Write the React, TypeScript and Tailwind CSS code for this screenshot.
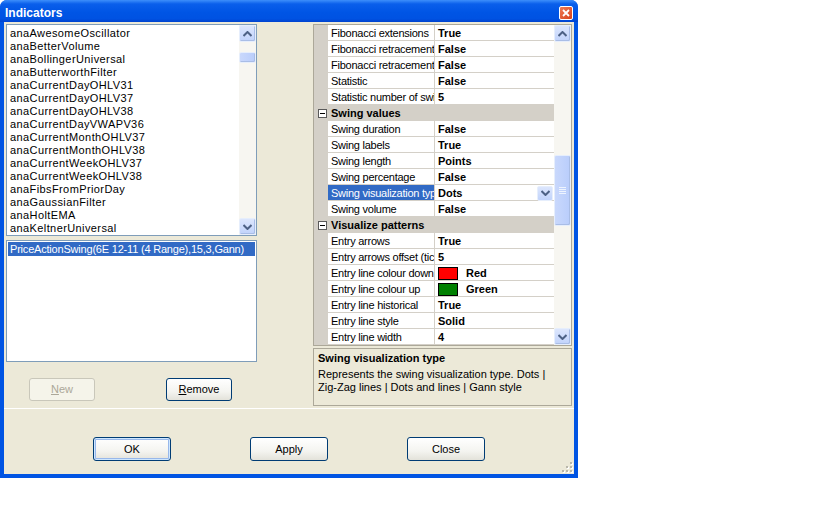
import { ReactNode } from 'react';

const indicators = [
  'anaAwesomeOscillator',
  'anaBetterVolume',
  'anaBollingerUniversal',
  'anaButterworthFilter',
  'anaCurrentDayOHLV31',
  'anaCurrentDayOHLV37',
  'anaCurrentDayOHLV38',
  'anaCurrentDayVWAPV36',
  'anaCurrentMonthOHLV37',
  'anaCurrentMonthOHLV38',
  'anaCurrentWeekOHLV37',
  'anaCurrentWeekOHLV38',
  'anaFibsFromPriorDay',
  'anaGaussianFilter',
  'anaHoltEMA',
  'anaKeltnerUniversal',
];

type Row =
  | { kind: 'cat'; label: string }
  | { kind: 'prop'; label: string; value: string; swatch?: string; selected?: boolean };

const rows: Row[] = [
  { kind: 'prop', label: 'Fibonacci extensions', value: 'True' },
  { kind: 'prop', label: 'Fibonacci retracements (historic)', value: 'False' },
  { kind: 'prop', label: 'Fibonacci retracements (current)', value: 'False' },
  { kind: 'prop', label: 'Statistic', value: 'False' },
  { kind: 'prop', label: 'Statistic number of swings', value: '5' },
  { kind: 'cat', label: 'Swing values' },
  { kind: 'prop', label: 'Swing duration', value: 'False' },
  { kind: 'prop', label: 'Swing labels', value: 'True' },
  { kind: 'prop', label: 'Swing length', value: 'Points' },
  { kind: 'prop', label: 'Swing percentage', value: 'False' },
  { kind: 'prop', label: 'Swing visualization type', value: 'Dots', selected: true },
  { kind: 'prop', label: 'Swing volume', value: 'False' },
  { kind: 'cat', label: 'Visualize patterns' },
  { kind: 'prop', label: 'Entry arrows', value: 'True' },
  { kind: 'prop', label: 'Entry arrows offset (ticks)', value: '5' },
  { kind: 'prop', label: 'Entry line colour down', value: 'Red', swatch: 'bg-[#FF0000]' },
  { kind: 'prop', label: 'Entry line colour up', value: 'Green', swatch: 'bg-[#008000]' },
  { kind: 'prop', label: 'Entry line historical', value: 'True' },
  { kind: 'prop', label: 'Entry line style', value: 'Solid' },
  { kind: 'prop', label: 'Entry line width', value: '4' },
];

function Chevron({ down = false }: { down?: boolean }) {
  return (
    <svg width="9" height="6" viewBox="0 0 9 6" className={down ? 'rotate-180' : ''}>
      <path d="M0.5 5 L4.5 1 L8.5 5" fill="none" stroke="#4D6185" strokeWidth="2" />
    </svg>
  );
}

function ScrollButton({ down = false }: { down?: boolean }) {
  return (
    <div className="flex h-[17px] w-[17px] shrink-0 items-center justify-center rounded-[2px] border border-[#E6EEFC] bg-[linear-gradient(to_bottom,#DCE6FD,#C1D3FB)] shadow-[inset_-1px_-1px_0_#A9BDE6]">
      <Chevron down={down} />
    </div>
  );
}

function Thumb({ className, grip = false }: { className: string; grip?: boolean }) {
  return (
    <div
      className={`${className} flex w-[17px] shrink-0 items-center justify-center rounded-[2px] border border-[#E6EEFC] bg-[linear-gradient(to_right,#C9D8FC,#B9CDFB)] shadow-[inset_-1px_-1px_0_#A9BDE6]`}
    >
      {grip && (
        <div className="flex flex-col gap-[1px]">
          <div className="h-px w-[7px] bg-[#EEF4FE]" />
          <div className="h-px w-[7px] bg-[#EEF4FE]" />
          <div className="h-px w-[7px] bg-[#EEF4FE]" />
          <div className="h-px w-[7px] bg-[#EEF4FE]" />
        </div>
      )}
    </div>
  );
}

function XpButton({
  children,
  disabled = false,
  isDefault = false,
  className = '',
}: {
  children: ReactNode;
  disabled?: boolean;
  isDefault?: boolean;
  className?: string;
}) {
  const border = disabled ? 'border-[#C9C7BA] text-[#ACA899]' : 'border-[#003C74] text-black';
  const face = disabled
    ? 'bg-[#F5F4EA]'
    : 'bg-[linear-gradient(to_bottom,#FFFFFF_0%,#F4F4F0_60%,#E3E2DA_100%)]';
  const ring = isDefault ? 'shadow-[inset_0_0_0_1px_#CEE7FF,inset_0_0_0_2px_#98B8EA]' : '';
  return (
    <div
      className={`${className} flex items-center justify-center rounded-[3px] border ${border} ${face} ${ring} text-[11px]`}
    >
      {children}
    </div>
  );
}

function PropRow({ row }: { row: Row }) {
  if (row.kind === 'cat') {
    return (
      <div className="flex h-[16px] items-center bg-[#D4D0C8] pt-[1px]">
        <div className="flex w-[14px] shrink-0 justify-center pl-[2px]">
          <div className="flex h-[9px] w-[9px] items-center justify-center border border-[#5A5A5A] bg-white">
            <div className="h-px w-[5px] bg-black" />
          </div>
        </div>
        <span className="pl-[3px] text-[11px] font-bold text-black">{row.label}</span>
      </div>
    );
  }
  return (
    <div className="flex h-[16px]">
      <div className="w-[14px] shrink-0 bg-[#D4D0C8]" />
      <div
        className={`flex w-[106px] shrink-0 items-center overflow-hidden whitespace-nowrap border-b border-[#D4D0C8] pl-[3px] pt-[1px] text-[11px] tracking-[-0.25px] ${
          row.selected ? 'bg-[#316AC5] text-white' : 'bg-white text-black'
        }`}
      >
        {row.label}
      </div>
      <div className="w-px shrink-0 bg-[#D4D0C8]" />
      <div className="flex flex-1 items-center border-b border-[#D4D0C8] bg-white pl-[3px] pt-[1px] text-[11px] font-bold text-black">
        {row.swatch && <div className={`mr-[8px] h-[13px] w-[20px] border border-black ${row.swatch}`} />}
        <span className="flex-1">{row.value}</span>
        {row.selected && (
          <div className="mr-[1px] flex h-[15px] w-[16px] items-center justify-center rounded-[2px] border border-[#E6EEFC] bg-[linear-gradient(to_bottom,#DCE6FD,#C1D3FB)]">
            <Chevron down />
          </div>
        )}
      </div>
    </div>
  );
}

export default function App() {
  return (
    <div className="h-[523px] w-[818px] bg-white font-['Liberation_Sans',Arial,sans-serif]">
      <div className="flex h-[478px] w-[578px] flex-col overflow-hidden rounded-t-[7px] bg-[#0054E3]">
        {/* Title bar */}
        <div className="flex h-[22px] shrink-0 items-center justify-between bg-[linear-gradient(to_bottom,#3D8FFB_0%,#0A5FEB_18%,#0055E5_55%,#0052E2_85%,#0043CF_100%)] pl-[5px] pr-[5px]">
          <span className="pt-[4px] text-[12px] font-bold text-white">Indicators</span>
          <div className="mt-[3px] flex h-[14px] w-[14px] items-center justify-center rounded-[2px] border border-white bg-[linear-gradient(135deg,#EE7A55,#D7421B)]">
            <svg width="8" height="8" viewBox="0 0 8 8">
              <path d="M1 1 L7 7 M7 1 L1 7" stroke="white" strokeWidth="1.8" />
            </svg>
          </div>
        </div>

        {/* Body */}
        <div className="mx-[4px] mb-[4px] flex flex-1 flex-col bg-[#ECE9D8]">
          <div className="flex h-[386px] shrink-0">
            {/* Left column: available + applied indicators */}
            <div className="ml-[2px] mt-[2px] flex w-[251px] flex-col">
              <div className="flex h-[212px] border border-[#7F9DB9] bg-white">
                <div className="flex-1 pl-[3px] pt-[2px]">
                  {indicators.map((name) => (
                    <div key={name} className="h-[13px] text-[11px] leading-[13px] tracking-[0.4px] text-black">
                      {name}
                    </div>
                  ))}
                </div>
                <div className="flex w-[17px] flex-col bg-[#F7F6F1]">
                  <ScrollButton />
                  <div className="h-[10px]" />
                  <Thumb className="h-[11px]" />
                  <div className="flex-1" />
                  <ScrollButton down />
                </div>
              </div>
              <div className="mt-[4px] h-[122px] border border-[#7F9DB9] bg-white p-[1px]">
                <div className="h-[14px] bg-[#316AC5] pl-[2px] text-[11px] leading-[15px] tracking-[-0.2px] text-white">
                  PriceActionSwing(6E 12-11 (4 Range),15,3,Gann)
                </div>
              </div>
              <div className="mt-[16px] flex">
                <XpButton disabled className="ml-[23px] h-[23px] w-[66px]">
                  <span className="underline">N</span>ew
                </XpButton>
                <XpButton className="ml-[71px] h-[23px] w-[66px]">
                  <span className="underline">R</span>emove
                </XpButton>
              </div>
            </div>

            {/* Right column: property grid + help */}
            <div className="ml-[56px] mt-[2px] flex w-[259px] flex-col">
              <div className="flex h-[322px] border border-[#ACA899] bg-white">
                <div className="flex-1">
                  {rows.map((row, i) => (
                    <PropRow key={i} row={row} />
                  ))}
                </div>
                <div className="flex w-[17px] flex-col bg-[#F7F6F1]">
                  <ScrollButton />
                  <div className="h-[113px]" />
                  <Thumb className="h-[71px]" grip />
                  <div className="flex-1" />
                  <ScrollButton down />
                </div>
              </div>
              <div className="mt-[2px] h-[58px] border border-[#ACA899] bg-[#ECE9D8] px-[4px] pt-[3px] text-[11px] leading-[13px] text-black">
                <div className="font-bold">Swing visualization type</div>
                <div className="mt-[3px]">Represents the swing visualization type. Dots |</div>
                <div>Zig-Zag lines | Dots and lines | Gann style</div>
              </div>
            </div>
          </div>

          {/* Separator */}
          <div className="h-px bg-[#FFFFFF]" />

          {/* Dialog buttons */}
          <div className="relative flex flex-1 items-start pt-[28px]">
            <XpButton isDefault className="ml-[89px] h-[24px] w-[78px]">
              OK
            </XpButton>
            <XpButton className="ml-[79px] h-[24px] w-[78px]">Apply</XpButton>
            <XpButton className="ml-[79px] h-[24px] w-[78px]">Close</XpButton>
            {/* Size grip */}
            <svg className="absolute bottom-[1px] right-[1px]" width="11" height="11" viewBox="0 0 11 11">
              {[
                [8, 0],
                [4, 4],
                [8, 4],
                [0, 8],
                [4, 8],
                [8, 8],
              ].map(([x, y], i) => (
                <g key={i}>
                  <rect x={x + 1} y={y + 1} width="2" height="2" fill="#FFFFFF" />
                  <rect x={x} y={y} width="2" height="2" fill="#B9B7AA" />
                </g>
              ))}
            </svg>
          </div>
        </div>
      </div>
    </div>
  );
}
